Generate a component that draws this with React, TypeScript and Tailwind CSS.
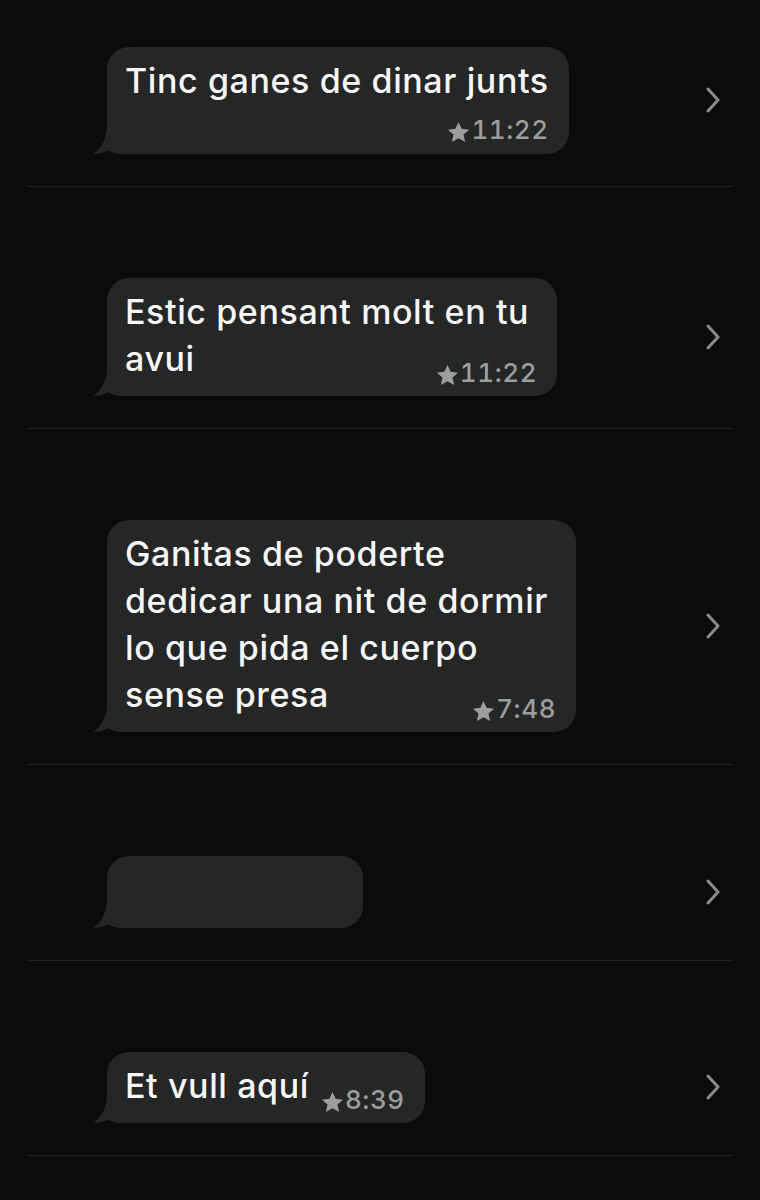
import { ReactNode } from 'react'

interface Mensagem {
  linhas: string[]
  hora?: string
  horaSozinha?: boolean
  vazia?: boolean
}

const mensagens: Mensagem[] = [
  { linhas: ['Tinc ganes de dinar junts'], hora: '11:22', horaSozinha: true },
  { linhas: ['Estic pensant molt en tu', 'avui'], hora: '11:22' },
  {
    linhas: ['Ganitas de poderte', 'dedicar una nit de dormir', 'lo que pida el cuerpo', 'sense presa'],
    hora: '7:48',
  },
  { linhas: [], vazia: true },
  { linhas: ['Et vull aquí'], hora: '8:39' },
]

function Estrela() {
  return (
    <svg viewBox="0 0 24 24" className="inline-block w-[23px] h-[23px] mr-[1px] -mb-[1px] fill-current">
      <path d="M12 1l3.3 7.2 7.8.8-5.9 5.2 1.7 7.8L12 18l-6.9 4 1.7-7.8L.9 9l7.8-.8z" />
    </svg>
  )
}

function Rabo() {
  // cauda do balão, canto inferior esquerdo
  return (
    <svg
      viewBox="0 0 40 30"
      className="absolute left-[-14px] bottom-0 w-[40px] h-[30px] fill-[#252626]"
    >
      <path d="M14 0 C14 13 10 23 0.5 29.6 C6 30.2 11 28.8 15 26.2 C19 29.2 24 30 30 30 L40 30 L40 0 Z" />
    </svg>
  )
}

function Chevron() {
  return (
    <svg viewBox="0 0 16 26" className="w-[16px] h-[26px]" fill="none">
      <polyline
        points="3,2 13,13 3,24"
        stroke="#8a8a8a"
        strokeWidth="3"
        strokeLinecap="round"
        strokeLinejoin="round"
      />
    </svg>
  )
}

function Hora({ texto }: { texto: string }) {
  return (
    <>
      <Estrela />
      {texto}
    </>
  )
}

function Balao({ msg }: { msg: Mensagem }) {
  if (msg.vazia) {
    return (
      <div className="relative w-[256px] h-[72px] rounded-[22px] bg-[#252626]">
        <Rabo />
      </div>
    )
  }

  const ultima = msg.linhas.length - 1
  const variasLinhas = msg.linhas.length > 1
  const linhas: ReactNode[] = msg.linhas.map((l, i) => (
    <span key={i}>
      {l}
      {i === ultima && !msg.horaSozinha && msg.hora && (
        <span
          className={`relative top-[25px] float-right ml-3 text-[26px] font-medium leading-none tabular-nums tracking-[0.6px] text-[#9d9d9d] ${variasLinhas ? '-mr-2' : ''}`}
        >
          <Hora texto={msg.hora} />
        </span>
      )}
      {i < ultima && <br />}
    </span>
  ))

  return (
    <div
      className={`relative inline-block rounded-[22px] bg-[#252626] pl-[18px] pt-[10px] pb-[14px] ${variasLinhas ? 'pr-[28px]' : 'pr-5'}`}
    >
      <Rabo />
      <div className="relative whitespace-nowrap text-[34px] font-medium leading-[47px] tracking-[0.6px] text-[#f7f7f7]">
        {linhas}
      </div>
      {msg.horaSozinha && msg.hora && (
        <div className="relative mt-[14px] -mb-[3px] text-right text-[26px] font-medium leading-6 tabular-nums tracking-[0.6px] text-[#9d9d9d]">
          <Hora texto={msg.hora} />
        </div>
      )}
    </div>
  )
}

export default function App() {
  return (
    <div className="min-h-screen bg-[#0b0b0b] px-[27px] font-[Inter,sans-serif]">
      {mensagens.map((msg, i) => (
        <div
          key={i}
          className={`flex items-center border-b border-[#202020] pb-[32px] ${i === 0 ? 'pt-[47px]' : 'pt-[91px]'}`}
        >
          <div className="flex-1 pl-[80px]">
            <Balao msg={msg} />
          </div>
          <div className="pr-[12px]">
            <Chevron />
          </div>
        </div>
      ))}
    </div>
  )
}
